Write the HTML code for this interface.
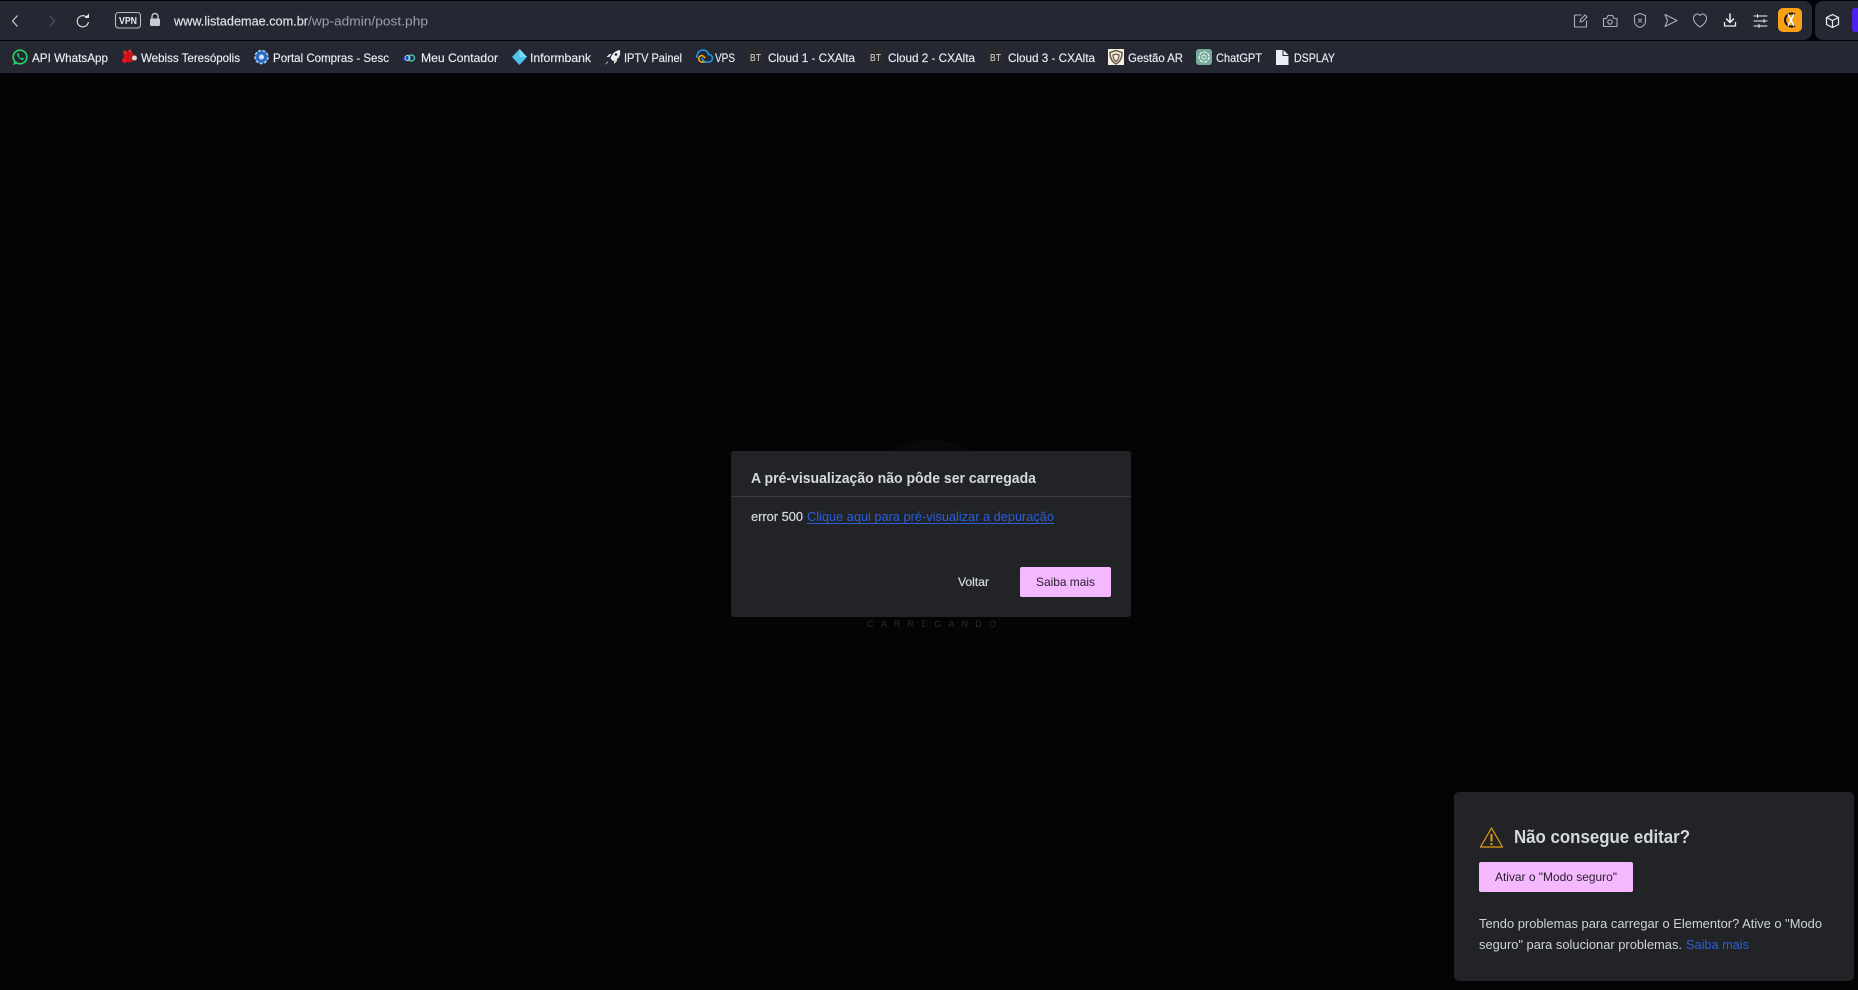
<!DOCTYPE html>
<html lang="pt-BR"><head><meta charset="utf-8"><title>Elementor</title>
<style>
html,body{margin:0;padding:0;width:1858px;height:990px;overflow:hidden;background:#040404}
svg{display:block}
text{font-family:"Liberation Sans",sans-serif;white-space:pre}
.b{font-size:12px;fill:#e9edf5;stroke:#e9edf5;stroke-width:.15}
.i{fill:none;stroke:#a9adb7;stroke-width:1.1;stroke-linecap:round;stroke-linejoin:round}
.w{fill:none;stroke:#eef0f4;stroke-width:1.3;stroke-linecap:round;stroke-linejoin:round}
.bt{font-size:10px;fill:#dcdcdc}
.m{stroke:#d5d8dc;stroke-width:.2}
</style></head><body>
<svg width="1858" height="990" viewBox="0 0 1858 990" xmlns="http://www.w3.org/2000/svg">
<rect width="1858" height="990" fill="#040404"/>
<rect width="1858" height="76" fill="#01030a"/>
<rect x="0" y="74" width="1858" height="916" fill="#040404"/>
<circle cx="931" cy="520" r="80" fill="#090909"/>

<!-- toolbar -->
<rect x="-10" y="1" width="1822" height="39" rx="8" fill="#252833"/>
<rect x="1815" y="1" width="60" height="39" rx="8" fill="#252833"/>
<rect x="-10" y="41" width="1880" height="32" rx="6" fill="#252833"/>

<path d="M17.500 15.500 12.500 21 17.500 26.500" fill="none" stroke="#d8dbe2" stroke-width="1"/>
<path d="M49.500 15.500 54.500 21 49.500 26.500" fill="none" stroke="#555966" stroke-width="1"/>
<path d="M87 17.500A5.600 5.600 0 1 0 88.400 22" fill="none" stroke="#e6e8ee" stroke-width="1.100"/>
<path d="M84.500 18h4.500v-4.500z" fill="#e6e8ee"/>
<rect x="115.500" y="12.500" width="25" height="15.500" rx="3" fill="none" stroke="#b8bbc3" stroke-width="1.100"/>
<text x="119" y="24" font-size="10" font-weight="bold" fill="#e6e8ee" textLength="18" lengthAdjust="spacingAndGlyphs">VPN</text>
<rect x="150" y="18.500" width="10" height="7.500" rx="1.200" fill="#c8cbd2"/>
<path d="M152 19v-2.500a3 3 0 0 1 6 0V19" fill="none" stroke="#c8cbd2" stroke-width="1.400"/>
<text x="174" y="25.500" font-size="13" fill="#dfe2ea" textLength="134" lengthAdjust="spacingAndGlyphs" stroke="#dfe2ea" stroke-width=".15">www.listademae.com.br</text>
<text x="308" y="25.500" font-size="13" fill="#9ba0ac" textLength="120" lengthAdjust="spacingAndGlyphs">/wp-admin/post.php</text>

<!-- right toolbar icons -->
<path d="M1581 15h-6.500v12h12v-6" class="i"/>
<path d="M1580 22l.5-2.500 4.500-4.500 2 2-4.500 4.500z" class="i"/>
<path d="M1603.500 18.500h3l1.500-3h4.500l1.500 3h3v8h-13.500z" class="i"/>
<circle cx="1610" cy="22" r="2.200" class="i"/>
<path d="M1640 13.500l5.500 2v6c0 3-2.500 5-5.500 6-3-1-5.500-3-5.500-6v-6z" class="i"/>
<path d="M1638.500 19l3 3m0-3l-3 3" class="i"/>
<path d="M1665 14.500l12 6-12 6 2.500-6z" class="i"/>
<path d="M1700 27c-4-2.500-6.500-5-6.500-8.500 0-4.500 4.500-5.500 6.500-3 2-2.500 6.500-1.500 6.500 3 0 3.500-2.500 6-6.500 8.500z" class="i"/>
<path d="M1730 14v8.500m-3.500-3.500l3.500 3.500 3.500-3.500" class="w" style="stroke-width:1.500"/>
<path d="M1724.500 22.500v3.500h11v-3.500" class="w"/>
<path d="M1754 16h13m-13 5h13m-13 5h13" class="w" style="stroke-width:1"/>
<path d="M1757.500 14.500v3m6.500 2v3m-5 2v3" class="w" style="stroke-width:1"/>
<rect x="1778" y="8" width="24" height="24" rx="5" fill="#f9a116"/>
<path d="M1795 14.500a6.500 6.500 0 1 0 0 11" fill="none" stroke="#111" stroke-width="2"/>
<path d="M1788 14l6 12m0-12l-6 12" fill="none" stroke="#fff" stroke-width="1.500"/>
<path d="M1832.500 14.500l6 3v7l-6 3-6-3v-7zM1826.500 17.500l6 3 6-3M1832.500 20.500v7" class="w" style="stroke-width:1.200"/>
<rect x="1852" y="8" width="10" height="24" rx="3" fill="#4b22ee"/>

<!-- bookmarks -->
<circle cx="20" cy="57" r="6.800" fill="none" stroke="#25d366" stroke-width="1.700"/>
<path d="M13 65l1.500-4.500 3 3z" fill="#25d366"/>
<path d="M17.500 53.500c-.8 1 0 3 1.500 4.500s3.500 2.500 4.500 1.500l.5-1-2-1-.8.700c-1-.4-2-1.400-2.500-2.500l.7-.8-1-2z" fill="#25d366"/>
<text x="32" y="62" class="b" textLength="76" lengthAdjust="spacingAndGlyphs">API WhatsApp</text>

<circle cx="129" cy="57" r="5.500" fill="#c8141c"/>
<circle cx="124.500" cy="60.500" r="2.500" fill="#e8161c"/>
<circle cx="125" cy="52.500" r="2" fill="#d22"/>
<circle cx="130" cy="51" r="1.500" fill="#e33"/>
<circle cx="134.500" cy="58" r="2.500" fill="#d8d8d8"/>
<text x="141" y="62" class="b" textLength="99" lengthAdjust="spacingAndGlyphs">Webiss Teresópolis</text>

<circle cx="261.500" cy="57" r="6.500" fill="#2d6cc0" stroke="#a8d2f4" stroke-width="1.500" stroke-dasharray="3 1.500"/>
<circle cx="261.500" cy="57" r="2.500" fill="#cfe6fa"/>
<text x="273" y="62" class="b" textLength="116" lengthAdjust="spacingAndGlyphs">Portal Compras - Sesc</text>

<path d="M402.500 60.500c0-2 1.500-3 3-3 .5-2 3-3 5-2l-1 5z" fill="#1434e8"/>
<circle cx="411.500" cy="58" r="3" fill="none" stroke="#35c0b0" stroke-width="1.500"/>
<circle cx="407.500" cy="58" r="2.500" fill="none" stroke="#cde" stroke-width="1"/>
<text x="421" y="62" class="b" textLength="77" lengthAdjust="spacingAndGlyphs">Meu Contador</text>

<path d="M519.500 49l7.500 8-7.500 8-7.500-8z" fill="#4cc2ec"/>
<path d="M519.500 49l7.500 8h-7.500z" fill="#7fdcf8"/>
<text x="530" y="62" class="b" textLength="61" lengthAdjust="spacingAndGlyphs">Informbank</text>

<path d="M620 50c-4.500.5-8 3.500-9.500 8.500l2.500 2.500c5-1.500 8-5 7-11z" fill="#f0f0f0"/>
<path d="M609.500 57h-3l3-3h2zM614 61v3l3-3v-2z" fill="#e0e0e0"/>
<path d="M607.500 61.500l-3 3.500 3.500-2.500z" fill="#e0e0e0"/>
<circle cx="616" cy="54.500" r="1.300" fill="#252833"/>
<text x="624" y="62" class="b" textLength="58" lengthAdjust="spacingAndGlyphs">IPTV Painel</text>

<path d="M697 58a3.500 3.500 0 0 1 .5-3.500c.5-3 3-4.500 5.500-4.500s5 1.500 5.500 4.500a3.700 3.700 0 0 1 .5 7.500h-4.500l-3-4" fill="none" stroke="#1e9be8" stroke-width="1.500"/>
<path d="M705 58c-1-1.500-2-2.500-3.500-2.500a3.300 3.300 0 0 0 0 6.500h3" fill="none" stroke="#f5b014" stroke-width="1.600"/>
<text x="715" y="62" class="b" textLength="20" lengthAdjust="spacingAndGlyphs">VPS</text>

<rect x="748" y="49" width="15" height="16" rx="2" fill="#2a2a2a"/>
<text x="750" y="61" class="bt" textLength="11" lengthAdjust="spacingAndGlyphs">BT</text>
<text x="768" y="62" class="b" textLength="87" lengthAdjust="spacingAndGlyphs">Cloud 1 - CXAlta</text>
<rect x="868" y="49" width="15" height="16" rx="2" fill="#2a2a2a"/>
<text x="870" y="61" class="bt" textLength="11" lengthAdjust="spacingAndGlyphs">BT</text>
<text x="888" y="62" class="b" textLength="87" lengthAdjust="spacingAndGlyphs">Cloud 2 - CXAlta</text>
<rect x="988" y="49" width="15" height="16" rx="2" fill="#2a2a2a"/>
<text x="990" y="61" class="bt" textLength="11" lengthAdjust="spacingAndGlyphs">BT</text>
<text x="1008" y="62" class="b" textLength="87" lengthAdjust="spacingAndGlyphs">Cloud 3 - CXAlta</text>

<rect x="1108" y="49" width="16" height="16" fill="#f4f0e8"/>
<path d="M1116 50.500l6 2c0 5-1.500 9-6 11.500-4.500-2.500-6-6.500-6-11.500z" fill="none" stroke="#6b5a3e" stroke-width="1.500"/>
<path d="M1116 54l3 1c0 3-1 5-3 6.500-2-1.500-3-3.500-3-6.500z" fill="none" stroke="#6b5a3e" stroke-width="1.300"/>
<text x="1128" y="62" class="b" textLength="55" lengthAdjust="spacingAndGlyphs">Gestão AR</text>

<rect x="1196" y="49" width="16" height="16" rx="3" fill="#74aa9c"/>
<circle cx="1204" cy="57" r="5" fill="none" stroke="#e4f0ec" stroke-width="1.300" stroke-dasharray="3.500 1"/>
<circle cx="1204" cy="57" r="2" fill="none" stroke="#e4f0ec" stroke-width="1"/>
<text x="1216" y="62" class="b" textLength="46" lengthAdjust="spacingAndGlyphs">ChatGPT</text>

<path d="M1276 50h7.500l5 5v10h-12.500z" fill="#e9edf5"/>
<path d="M1283 50v5.500h5.500" fill="none" stroke="#252833" stroke-width="1"/>
<text x="1294" y="62" class="b" textLength="41" lengthAdjust="spacingAndGlyphs">DSPLAY</text>

<!-- loading label -->
<text x="867" y="627" font-size="9" fill="#2a2a2a" textLength="129">CARREGANDO</text>

<!-- dialog -->
<rect x="731" y="451" width="400" height="166" rx="3" fill="#212327"/>
<rect x="731" y="496" width="400" height="1" fill="#383b40"/>
<text x="751" y="483" font-size="14.500" font-weight="bold" fill="#d5d8dc" textLength="285" lengthAdjust="spacingAndGlyphs">A pré-visualização não pôde ser carregada</text>
<text x="751" y="521" font-size="13" fill="#d5d8dc" class="m" textLength="52" lengthAdjust="spacingAndGlyphs">error 500</text>
<text x="807" y="521" font-size="13" fill="#2a5fd8" textLength="247" lengthAdjust="spacingAndGlyphs">Clique aqui para pré-visualizar a depuração</text>
<rect x="807" y="523" width="247" height="1" fill="#2a5fd8"/>
<text x="958" y="586" font-size="12" fill="#d5d8dc" class="m" textLength="31" lengthAdjust="spacingAndGlyphs">Voltar</text>
<rect x="1020" y="567" width="91" height="30" rx="2" fill="#f3b8fd"/>
<text x="1036" y="586" font-size="12" fill="#2a2030" textLength="59" lengthAdjust="spacingAndGlyphs">Saiba mais</text>

<!-- safe mode -->
<rect x="1454" y="792" width="400" height="189" rx="5" fill="#212327"/>
<path d="M1491.500 828l11 19h-22z" fill="none" stroke="#e69a0e" stroke-width="1.200" stroke-linejoin="round"/>
<rect x="1490.500" y="834" width="2" height="7.500" fill="#e69a0e"/>
<rect x="1490.500" y="843" width="2" height="2" fill="#e69a0e"/>
<text x="1514" y="843" font-size="18" font-weight="bold" fill="#d5d8dc" textLength="176" lengthAdjust="spacingAndGlyphs">Não consegue editar?</text>
<rect x="1479" y="862" width="154" height="30" rx="2" fill="#f3b8fd"/>
<text x="1495" y="881" font-size="12" fill="#2a2030" textLength="122" lengthAdjust="spacingAndGlyphs">Ativar o "Modo seguro"</text>
<text x="1479" y="928" font-size="13" fill="#d0d3d8" textLength="343" lengthAdjust="spacingAndGlyphs">Tendo problemas para carregar o Elementor? Ative o "Modo</text>
<text x="1479" y="949" font-size="13" fill="#d0d3d8" textLength="203" lengthAdjust="spacingAndGlyphs">seguro" para solucionar problemas.</text>
<text x="1686" y="949" font-size="13" fill="#2a5fd8" textLength="63" lengthAdjust="spacingAndGlyphs">Saiba mais</text>
</svg>
</body></html>
